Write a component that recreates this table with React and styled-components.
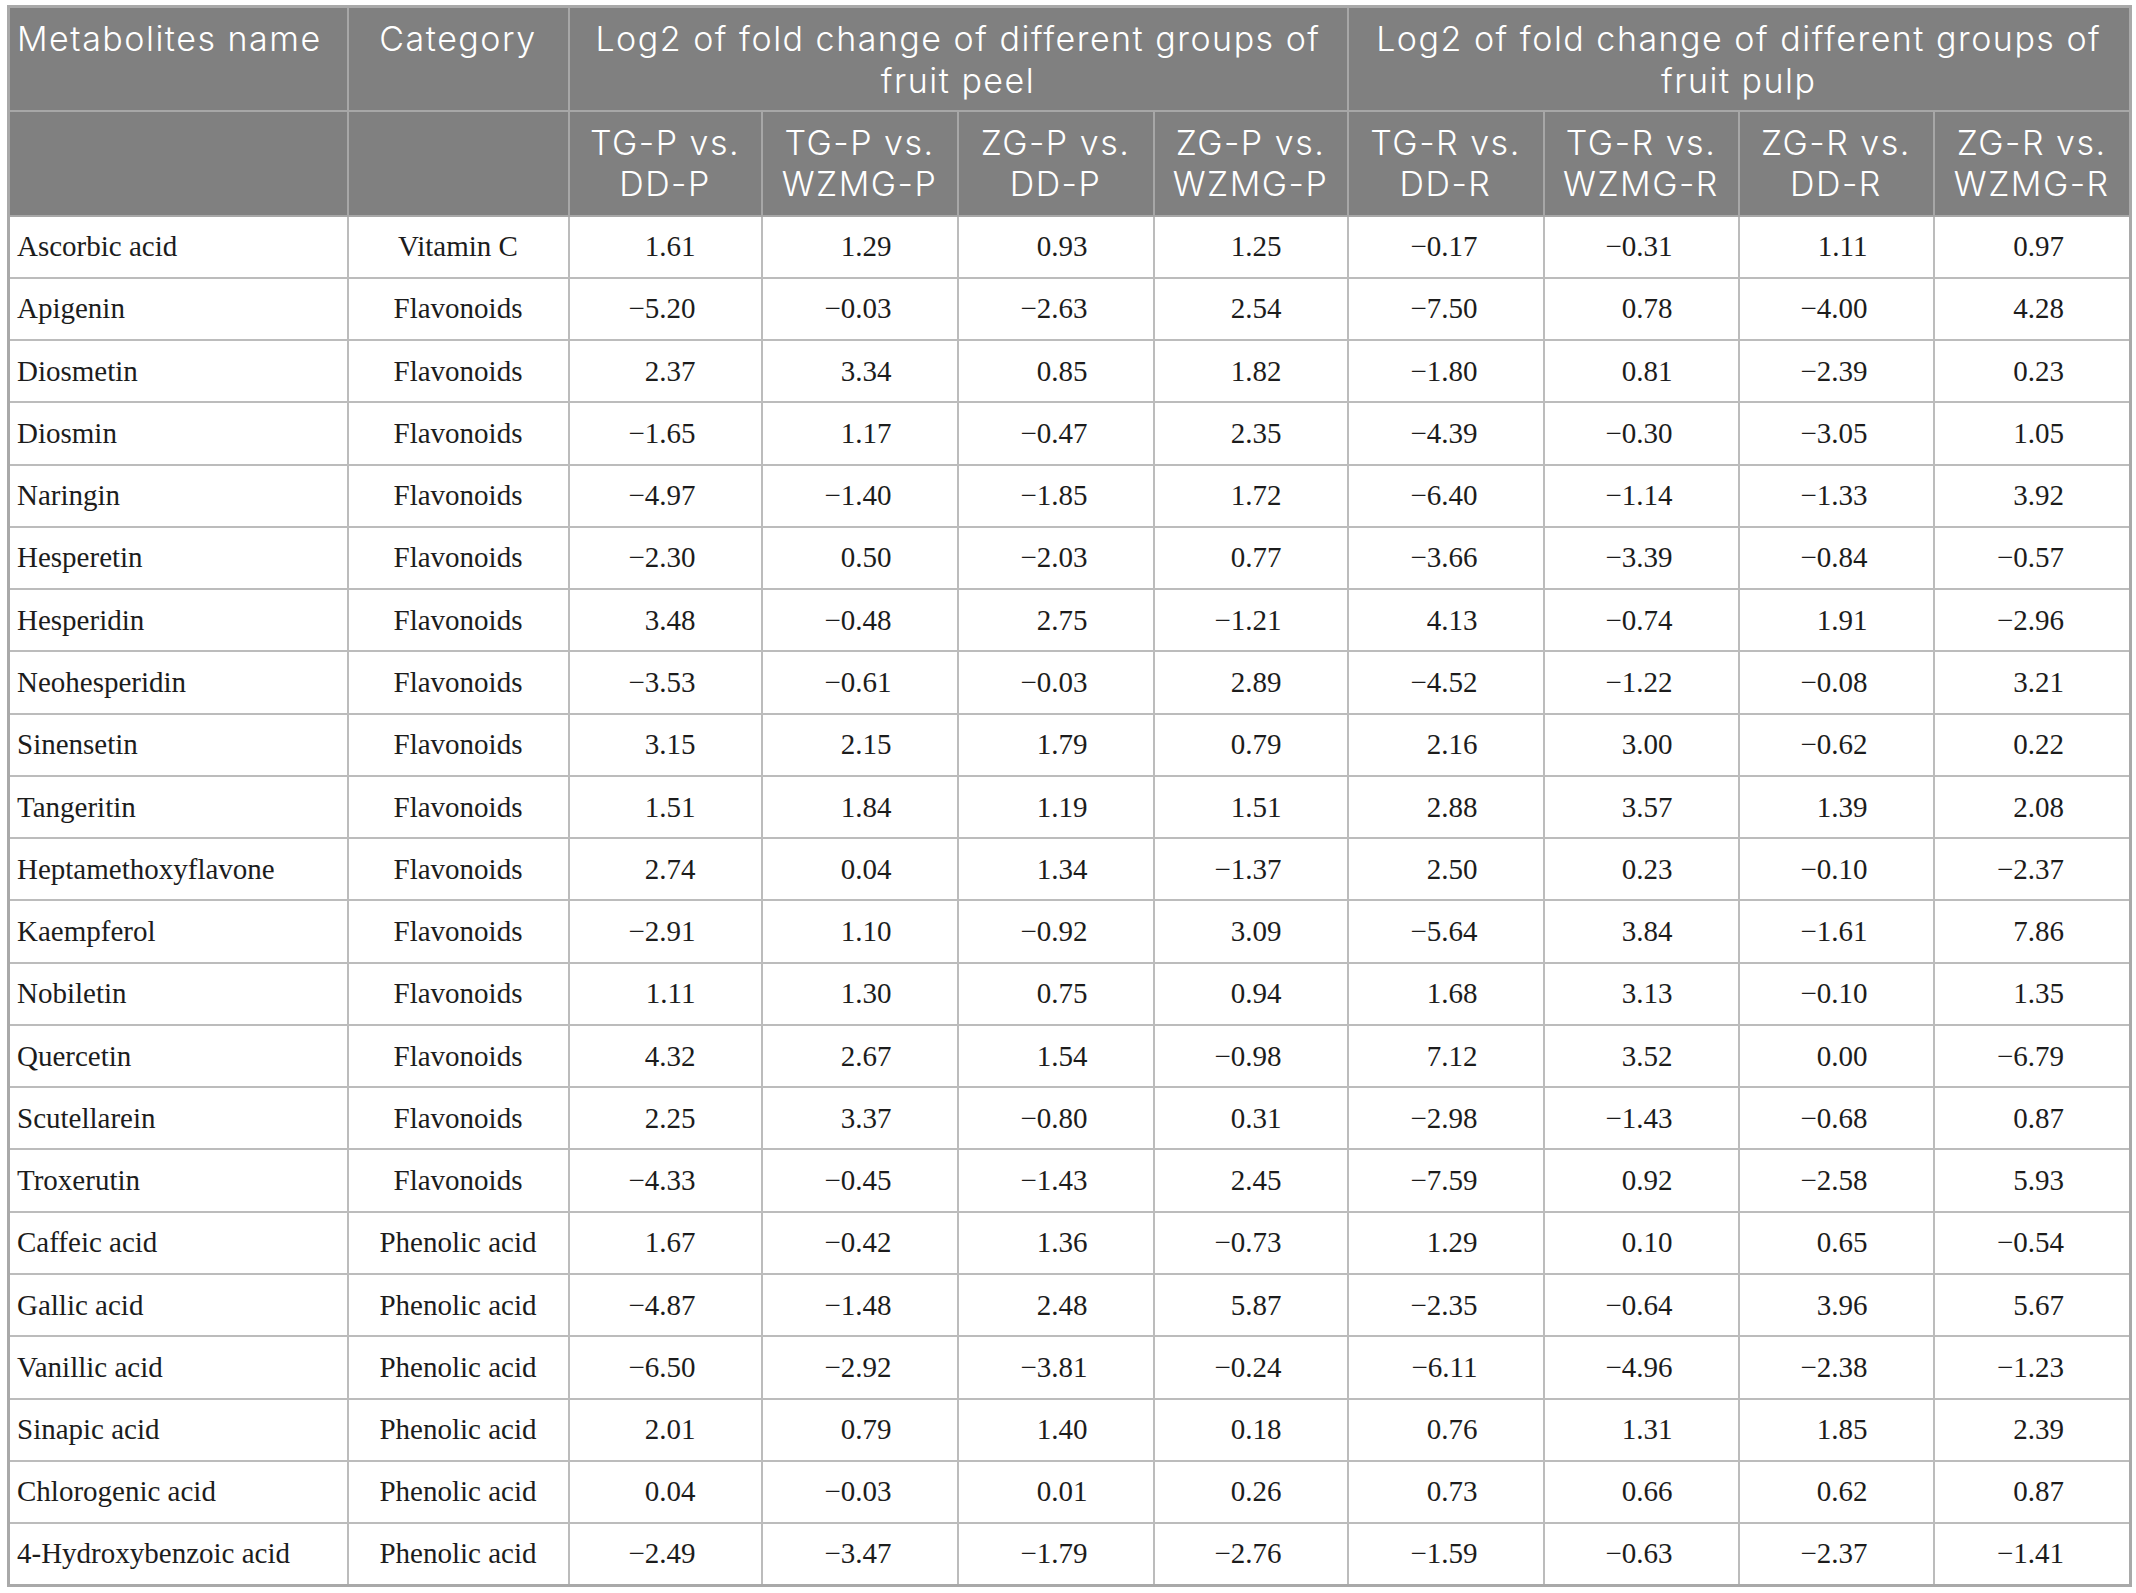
import React from "react";
import styled, { createGlobalStyle } from "styled-components";

const Global = createGlobalStyle`
  html, body { margin: 0; padding: 0; background: #ffffff; }
`;

const Page = styled.div`
  padding: 5px 0 0 7px;
  background: #ffffff;
`;

const Table = styled.table`
  border-collapse: collapse;
  table-layout: fixed;
  width: 2122px;
  border: 3px solid #a9a9a9;
`;

const HeadCell = styled.th`
  background: #808080;
  color: #ffffff;
  font-family: "Inter", "Open Sans", sans-serif;
  font-weight: 300;
  font-size: 34px;
  letter-spacing: 1.5px;
  line-height: 41.5px;
  border: 2px solid #a7a7a7;
  vertical-align: top;
  padding: 10px 2px 6px;
  text-align: ${(p) => (p.$left ? "left" : "center")};
  padding-left: ${(p) => (p.$left ? "7px" : "2px")};
  height: ${(p) => p.$h}px;
  box-sizing: border-box;
  white-space: nowrap;
`;

const Row = styled.tr`
  height: 62.27px;
`;

const Cell = styled.td`
  font-family: "Liberation Serif", "Times New Roman", serif;
  font-size: 29px;
  color: #1c1c1c;
  border: 2px solid #bcbcbc;
  vertical-align: middle;
  padding: 0 ${(p) => (p.$num ? "65px" : "8px")} 0 ${(p) => (p.$left ? "7px" : "8px")};
  text-align: ${(p) => (p.$num ? "right" : p.$left ? "left" : "center")};
  white-space: nowrap;
`;

const widths = [339, 221, 193, 196, 196, 194, 196, 195, 195, 197];

const rows = [
  ["Ascorbic acid", "Vitamin C", "1.61", "1.29", "0.93", "1.25", "−0.17", "−0.31", "1.11", "0.97"],
  ["Apigenin", "Flavonoids", "−5.20", "−0.03", "−2.63", "2.54", "−7.50", "0.78", "−4.00", "4.28"],
  ["Diosmetin", "Flavonoids", "2.37", "3.34", "0.85", "1.82", "−1.80", "0.81", "−2.39", "0.23"],
  ["Diosmin", "Flavonoids", "−1.65", "1.17", "−0.47", "2.35", "−4.39", "−0.30", "−3.05", "1.05"],
  ["Naringin", "Flavonoids", "−4.97", "−1.40", "−1.85", "1.72", "−6.40", "−1.14", "−1.33", "3.92"],
  ["Hesperetin", "Flavonoids", "−2.30", "0.50", "−2.03", "0.77", "−3.66", "−3.39", "−0.84", "−0.57"],
  ["Hesperidin", "Flavonoids", "3.48", "−0.48", "2.75", "−1.21", "4.13", "−0.74", "1.91", "−2.96"],
  ["Neohesperidin", "Flavonoids", "−3.53", "−0.61", "−0.03", "2.89", "−4.52", "−1.22", "−0.08", "3.21"],
  ["Sinensetin", "Flavonoids", "3.15", "2.15", "1.79", "0.79", "2.16", "3.00", "−0.62", "0.22"],
  ["Tangeritin", "Flavonoids", "1.51", "1.84", "1.19", "1.51", "2.88", "3.57", "1.39", "2.08"],
  ["Heptamethoxyflavone", "Flavonoids", "2.74", "0.04", "1.34", "−1.37", "2.50", "0.23", "−0.10", "−2.37"],
  ["Kaempferol", "Flavonoids", "−2.91", "1.10", "−0.92", "3.09", "−5.64", "3.84", "−1.61", "7.86"],
  ["Nobiletin", "Flavonoids", "1.11", "1.30", "0.75", "0.94", "1.68", "3.13", "−0.10", "1.35"],
  ["Quercetin", "Flavonoids", "4.32", "2.67", "1.54", "−0.98", "7.12", "3.52", "0.00", "−6.79"],
  ["Scutellarein", "Flavonoids", "2.25", "3.37", "−0.80", "0.31", "−2.98", "−1.43", "−0.68", "0.87"],
  ["Troxerutin", "Flavonoids", "−4.33", "−0.45", "−1.43", "2.45", "−7.59", "0.92", "−2.58", "5.93"],
  ["Caffeic acid", "Phenolic acid", "1.67", "−0.42", "1.36", "−0.73", "1.29", "0.10", "0.65", "−0.54"],
  ["Gallic acid", "Phenolic acid", "−4.87", "−1.48", "2.48", "5.87", "−2.35", "−0.64", "3.96", "5.67"],
  ["Vanillic acid", "Phenolic acid", "−6.50", "−2.92", "−3.81", "−0.24", "−6.11", "−4.96", "−2.38", "−1.23"],
  ["Sinapic acid", "Phenolic acid", "2.01", "0.79", "1.40", "0.18", "0.76", "1.31", "1.85", "2.39"],
  ["Chlorogenic acid", "Phenolic acid", "0.04", "−0.03", "0.01", "0.26", "0.73", "0.66", "0.62", "0.87"],
  ["4-Hydroxybenzoic acid", "Phenolic acid", "−2.49", "−3.47", "−1.79", "−2.76", "−1.59", "−0.63", "−2.37", "−1.41"],
];

const subHeads = [
  ["TG-P vs.", "DD-P"],
  ["TG-P vs.", "WZMG-P"],
  ["ZG-P vs.", "DD-P"],
  ["ZG-P vs.", "WZMG-P"],
  ["TG-R vs.", "DD-R"],
  ["TG-R vs.", "WZMG-R"],
  ["ZG-R vs.", "DD-R"],
  ["ZG-R vs.", "WZMG-R"],
];

export default function App() {
  return (
    <>
      <Global />
      <Page>
        <Table>
          <colgroup>
            {widths.map((w, i) => (
              <col key={i} style={{ width: w }} />
            ))}
          </colgroup>
          <thead>
            <tr>
              <HeadCell $left $h={104}>Metabolites name</HeadCell>
              <HeadCell $h={104}>Category</HeadCell>
              <HeadCell colSpan={4} $h={104}>
                Log2 of fold change of different groups of
                <br />
                fruit peel
              </HeadCell>
              <HeadCell colSpan={4} $h={104}>
                Log2 of fold change of different groups of
                <br />
                fruit pulp
              </HeadCell>
            </tr>
            <tr>
              <HeadCell $left $h={105} />
              <HeadCell $h={105} />
              {subHeads.map(([a, b], i) => (
                <HeadCell key={i} $h={105}>
                  {a}
                  <br />
                  {b}
                </HeadCell>
              ))}
            </tr>
          </thead>
          <tbody>
            {rows.map((r, i) => (
              <Row key={i}>
                <Cell $left>{r[0]}</Cell>
                <Cell>{r[1]}</Cell>
                {r.slice(2).map((v, j) => (
                  <Cell key={j} $num>
                    {v}
                  </Cell>
                ))}
              </Row>
            ))}
          </tbody>
        </Table>
      </Page>
    </>
  );
}
